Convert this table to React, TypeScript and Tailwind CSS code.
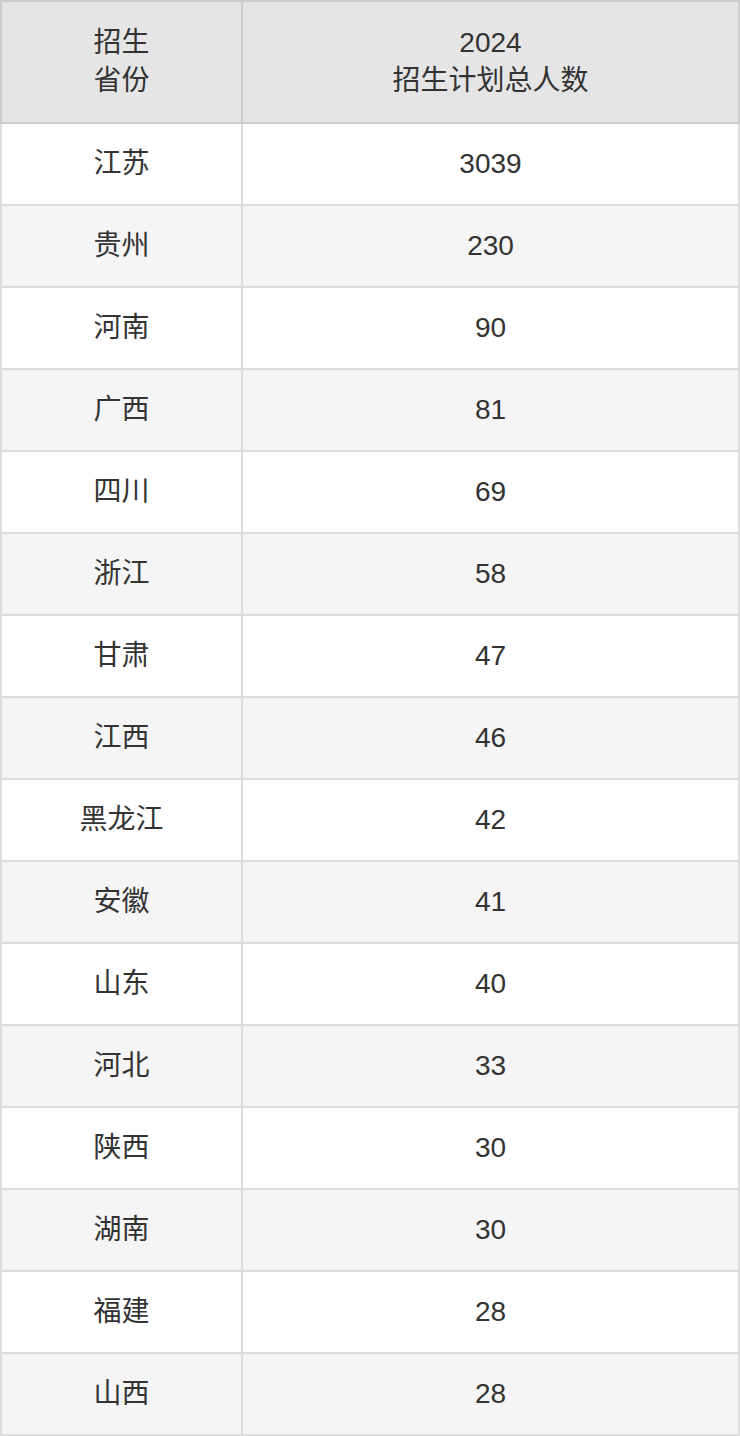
const rows: [string, string][] = [
  ["江苏", "3039"],
  ["贵州", "230"],
  ["河南", "90"],
  ["广西", "81"],
  ["四川", "69"],
  ["浙江", "58"],
  ["甘肃", "47"],
  ["江西", "46"],
  ["黑龙江", "42"],
  ["安徽", "41"],
  ["山东", "40"],
  ["河北", "33"],
  ["陕西", "30"],
  ["湖南", "30"],
  ["福建", "28"],
  ["山西", "28"],
];

export default function App() {
  return (
    <div className="w-[740px] bg-white font-['Liberation_Sans','Noto_Sans_CJK_SC',sans-serif] text-[28px] leading-[38px] text-[#333]">
      <table className="w-full border-collapse border-2 border-[#d9d9d9] text-center">
        <thead>
          <tr className="h-[122px] bg-[#e5e5e5]">
            <th className="w-[241px] border-2 border-[#cccccc] font-normal">
              招生
              <br />
              省份
            </th>
            <th className="border-2 border-[#cccccc] font-normal">
              2024
              <br />
              招生计划总人数
            </th>
          </tr>
        </thead>
        <tbody>
          {rows.map(([prov, num], i) => (
            <tr key={prov + i} className={i % 2 === 0 ? "h-[82px] bg-white" : "h-[82px] bg-[#f5f5f5]"}>
              <td className="border-2 border-[#dddddd]">{prov}</td>
              <td className="border-2 border-[#dddddd]">{num}</td>
            </tr>
          ))}
        </tbody>
      </table>
    </div>
  );
}
